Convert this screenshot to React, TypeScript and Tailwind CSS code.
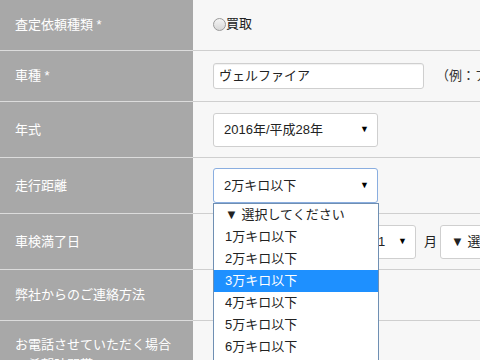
import React from 'react';

const Arrow: React.FC = () => <span className="text-[9px] leading-none text-black">▼</span>;

const SelectBox: React.FC<{ text: string; w: string; focus?: boolean; h?: string; cls?: string }> = ({ text, w, focus, h = 'h-[34px]', cls = '' }) => (
  <div
    className={`${w} ${h} ${cls} shrink-0 flex items-center justify-between pl-[10px] pr-[8px] bg-white rounded-[3px] border ${
      focus ? 'border-[#8aaee0]' : 'border-[#cfcfcf]'
    }`}
  >
    <span className="text-[13px] text-[#222] whitespace-nowrap">{text}</span>
    <Arrow />
  </div>
);

const Row: React.FC<{ label: string; h: string; top?: boolean; children?: React.ReactNode }> = ({ label, h, top, children }) => (
  <div className={`flex ${h} border-b border-[#cfcfcf]`}>
    <div
      className={`w-[193px] shrink-0 bg-[#a8a8a8] border-b border-[#dcdcdc] -mb-px pl-[15px] pr-[15px] text-white text-[13px] leading-[20px] flex ${
        top ? 'items-start pt-[14px]' : 'items-center'
      }`}
    >
      {label}
    </div>
    <div className="flex-1 min-w-0 flex items-center pl-[20px] overflow-hidden">{children}</div>
  </div>
);

export default function App() {
  const options = ['▼ 選択してください', '1万キロ以下', '2万キロ以下', '3万キロ以下', '4万キロ以下', '5万キロ以下', '6万キロ以下', '7万キロ以下'];

  return (
    <div className="relative w-[480px] h-[360px] overflow-hidden bg-[#f7f7f7] font-['Liberation_Sans','Noto_Sans_CJK_JP',sans-serif]">
      <Row label="査定依頼種類 *" h="h-[51px]">
        <div className="flex items-center text-[13px] text-[#222] -mt-[2px]">
          <span className="w-[13px] h-[13px] rounded-full border border-[#9a9a9a] bg-gradient-to-b from-[#f4f4f4] to-[#d8d8d8]" />
          <span>買取</span>
        </div>
      </Row>
      <Row label="車種 *" h="h-[51px]">
        <div className="w-[211px] h-[26px] shrink-0 bg-white border border-[#cfcfcf] rounded-[3px] shadow-[inset_0_1px_1px_rgba(0,0,0,0.06)] flex items-center pl-[5px] text-[13px] text-[#222]">
          ヴェルファイア
        </div>
        <span className="ml-[12px] text-[13px] text-[#333] whitespace-nowrap">（例：アルファード）</span>
      </Row>
      <Row label="年式" h="h-[56px]">
        <SelectBox text="2016年/平成28年" w="w-[165px]" />
      </Row>
      <Row label="走行距離" h="h-[56px]">
        <SelectBox text="2万キロ以下" w="w-[165px]" focus h="h-[35px]" />
      </Row>
      <Row label="車検満了日" h="h-[56px]">
        <SelectBox text="2021年" w="w-[140px]" />
        <span className="ml-[3px] text-[13px] text-[#222] shrink-0">年</span>
        <div className="w-[47px] h-[34px] shrink-0 flex items-center justify-between pl-[8px] pr-[8px] bg-white rounded-[3px] border border-[#cfcfcf]">
          <span className="text-[13px] text-[#222]">1</span>
          <Arrow />
        </div>
        <span className="ml-[8px] text-[13px] text-[#222] shrink-0">月</span>
        <div className="ml-[3px] w-[120px] h-[34px] shrink-0 flex items-center pl-[10px] bg-white rounded-[3px] border border-[#cfcfcf]">
          <span className="text-[13px] text-[#222] whitespace-nowrap">▼ 選択してください</span>
        </div>
      </Row>
      <Row label="弊社からのご連絡方法" h="h-[51px]" />
      <Row label="お電話させていただく場合の希望時間帯" h="h-[60px]" top />

      <div className="absolute left-[213px] top-[203px] w-[166px] h-[170px] bg-white border border-[#6f8fb3]">
        {options.map((o, i) => (
          <div
            key={i}
            className={`h-[22px] flex items-center pl-[11px] text-[13px] whitespace-nowrap ${
              i === 3 ? 'bg-[#1e90ff] text-white' : 'text-[#222]'
            }`}
          >
            {o}
          </div>
        ))}
      </div>
    </div>
  );
}
